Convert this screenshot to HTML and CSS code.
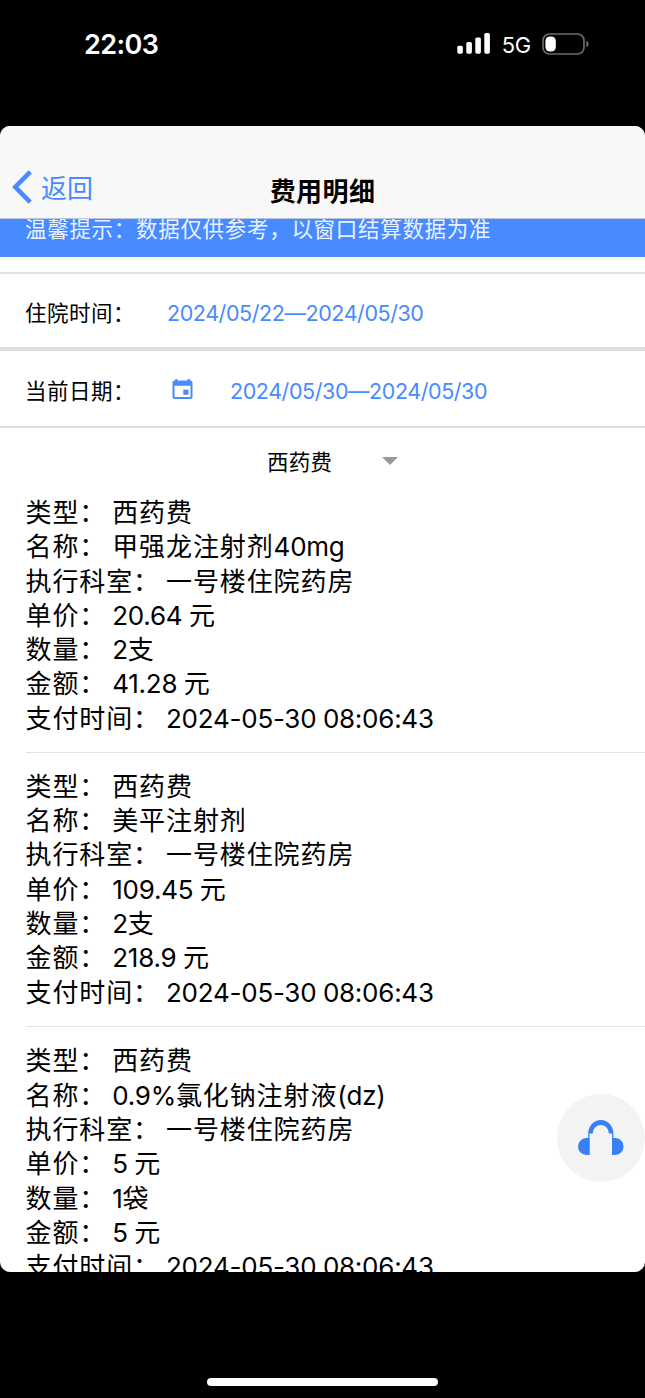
FILE: index.html
```html
<!DOCTYPE html>
<html lang="zh-CN">

<head>
    <meta charset="UTF-8">
    <meta name="viewport" content="width=device-width, initial-scale=1.0">
    <title>费用明细</title>
    <link rel="stylesheet" href="styles.css">
</head>

<body>

    <div class="status-bar">
        <span class="time">22:03</span>
        <div class="status-right">
            <svg class="signal" width="34" height="22" viewBox="0 0 34 22" fill="#fff">
                <rect x="0.3" y="12.7" width="5.6" height="8" rx="1.6" />
                <rect x="9.3" y="9" width="5.6" height="11.7" rx="1.6" />
                <rect x="18.3" y="4.6" width="5.6" height="16.1" rx="1.6" />
                <rect x="27.3" y="0" width="5.6" height="20.7" rx="1.6" />
            </svg>
            <span class="network">5G</span>
            <svg class="battery" width="48" height="22" viewBox="0 0 48 22">
                <rect x="1" y="1" width="41" height="20" rx="6.5" fill="none" stroke="#6b6b6b" stroke-width="1.7" />
                <rect x="3.4" y="3.5" width="10.4" height="15" rx="4.4" fill="#fff" />
                <path d="M44.3 7.7c3 1.2 3 5.4 0 6.6z" fill="#6b6b6b" />
            </svg>
        </div>
    </div>

    <div class="sheet">
        <div class="nav">
            <a class="back">
                <svg width="20" height="34" viewBox="0 0 20 34" fill="none" stroke="#488aff" stroke-width="4.6">
                    <path d="M18.2 1.8 3.3 17l14.9 15.2" />
                </svg>
                <span>返回</span>
            </a>
            <h1>费用明细</h1>
        </div>

        <div class="tip"><p>温馨提示：数据仅供参考，以窗口结算数据为准</p></div>

        <div class="row stay">
            <span class="label">住院时间：</span>
            <span class="date">2024/05/22—2024/05/30</span>
        </div>
        <div class="row current">
            <span class="label">当前日期：</span>
            <svg class="calendar" width="21" height="21" viewBox="0 0 21 21" fill="#488aff">
                <path fill-rule="evenodd" d="M3.2 0h2.2v1.5h10.2V0h2.2v1.500h.7A2 2 0 0 1 20.5 3.500v14.500a2 2 0 0 1-2 2h-16a2 2 0 0 1-2-2V3.500a2 2 0 0 1 2-2h.7zM2.5 6.800v11.200h16V6.800z" />
                <rect x="11.3" y="10.6" width="5.2" height="5.2" />
            </svg>
            <span class="date">2024/05/30—2024/05/30</span>
        </div>

        <div class="select">
            <span>西药费</span>
            <i class="arrow"></i>
        </div>

        <div class="list">
            <div class="item">
                <p><span>类型：</span>西药费</p>
                <p><span>名称：</span>甲强龙注射剂<b>40mg</b></p>
                <p><span>执行科室：</span>一号楼住院药房</p>
                <p><span>单价：</span><b>20.64 </b>元</p>
                <p><span>数量：</span><b>2</b>支</p>
                <p><span>金额：</span><b>41.28 </b>元</p>
                <p><span>支付时间：</span><b>2024-05-30 08:06:43</b></p>
            </div>
            <div class="item">
                <p><span>类型：</span>西药费</p>
                <p><span>名称：</span>美平注射剂</p>
                <p><span>执行科室：</span>一号楼住院药房</p>
                <p><span>单价：</span><b>109.45 </b>元</p>
                <p><span>数量：</span><b>2</b>支</p>
                <p><span>金额：</span><b>218.9 </b>元</p>
                <p><span>支付时间：</span><b>2024-05-30 08:06:43</b></p>
            </div>
            <div class="item">
                <p><span>类型：</span>西药费</p>
                <p><span>名称：</span><b>0.9%</b>氯化钠注射液<b>(dz)</b></p>
                <p><span>执行科室：</span>一号楼住院药房</p>
                <p><span>单价：</span><b>5 </b>元</p>
                <p><span>数量：</span><b>1</b>袋</p>
                <p><span>金额：</span><b>5 </b>元</p>
                <p><span>支付时间：</span><b>2024-05-30 08:06:43</b></p>
            </div>
        </div>

        <!-- floating customer service button -->
        <div class="service">
            <svg width="46" height="36" viewBox="0 0 46 36" fill="#3880f5">
                <path d="M10.2 13.500a12.600 13.500 0 0 1 25.200 0v21.500h-1.300V13.500h-3.200a8.100 8.500 0 0 0-16.200 0h-3.200v21.500h-1.300z" />
                <path d="M11.5 18v17H8.500a8.500 8.500 0 0 1 0-17zM34.1 18v17h3a8.500 8.500 0 0 0 0-17z" />
            </svg>
        </div>
    </div>

    <div class="home-indicator"></div>

</body>

</html>
```
FILE: styles.css
```css
* {
    box-sizing: border-box;
}

body {
    margin: 0;
    height: 1398px;
    display: flex;
    flex-direction: column;
    background-color: #000;
    color: #000;
    font-family: Inter, "Noto Sans CJK SC", sans-serif;
    overflow: hidden;
}

h1,
p {
    margin: 0;
}

.status-bar {
    height: 126px;
    flex: none;
    display: flex;
    justify-content: space-between;
    align-items: flex-start;
    padding: 27px 55px 0 84px;
    color: #fff;
}

.time {
    font-size: 27px;
    font-weight: 600;
    line-height: 34px;
    letter-spacing: -0.6px;
    padding-top: 1px;
}

.status-right {
    display: flex;
    align-items: center;
    height: 34px;
}

.network {
    font-size: 22px;
    line-height: 34px;
    letter-spacing: -0.3px;
    margin: 2px 11px 0;
}

/* app page */
.sheet {
    position: relative;
    flex: none;
    height: 1146px;
    background-color: #fff;
    border-radius: 10px;
    overflow: hidden;
}

.nav {
    height: 93px;
    display: grid;
    grid-template-columns: 1fr auto 1fr;
    background-color: #f8f8f8;
    border-bottom: 1px solid #b9c6dd;
}

.back {
    display: flex;
    align-items: center;
    gap: 9px;
    height: 34px;
    margin: 44px 0 0 12px;
    color: #488aff;
    font-size: 26px;
}

.back span {
    margin-top: -2px;
}

.nav h1 {
    margin-top: 46px;
    font-size: 26px;
    line-height: 40px;
    font-weight: 700;
    letter-spacing: 0.4px;
}

.tip {
    height: 38px;
    padding-left: 25px;
    background-color: #488aff;
    overflow: hidden;
}

.tip p {
    margin-top: -6px;
    color: #e9f1ff;
    font-size: 21.5px;
    line-height: 32px;
    letter-spacing: 0.7px;
}

.row {
    display: flex;
    align-items: center;
    padding-left: 25px;
    font-size: 21.5px;
    border-bottom: 2px solid #dedede;
}

.label {
    width: 142px;
    letter-spacing: 0.5px;
}

.date {
    color: #488aff;
    letter-spacing: -0.43px;
    padding-top: 2px;
}

.stay {
    height: 79px;
    margin-top: 15px;
    padding-top: 2px;
    border-top: 2px solid #e2e2e2;
    border-bottom-width: 4px;
}

.current {
    height: 77px;
    padding-top: 2px;
}

.calendar {
    margin: 0 37px 1px 5px;
}

.select {
    display: flex;
    align-items: center;
    height: 68px;
    padding: 0 0 4px 267px;
    font-size: 21.5px;
    letter-spacing: 0.3px;
}

.arrow {
    margin: 2px 0 0 50px;
    border: 8px solid transparent;
    border-top-color: #999;
    border-bottom: 0;
}

.list {
    padding-left: 25.5px;
    font-size: 26px;
    line-height: 34.3px;
    letter-spacing: 0.9px;
}

.item {
    height: 274.5px;
    border-bottom: 1px solid #e2e2e2;
}

.item + .item {
    padding-top: 17.4px;
}

.item:first-child {
    height: 256.5px;
}

.item p {
    height: 34.3px;
    white-space: nowrap;
}

.item span {
    margin-right: 6px;
}

.item b {
    font-weight: 400;
    letter-spacing: -0.25px;
    word-spacing: -0.5px;
}

.service {
    position: absolute;
    right: 0;
    bottom: 90px;
    width: 88px;
    height: 88px;
    display: flex;
    align-items: center;
    justify-content: center;
    border-radius: 50%;
    background-color: #f3f3f3;
}

.home-indicator {
    width: 231px;
    height: 8px;
    margin: 106px auto 0;
    border-radius: 4px;
    background-color: #fff;
}
```
